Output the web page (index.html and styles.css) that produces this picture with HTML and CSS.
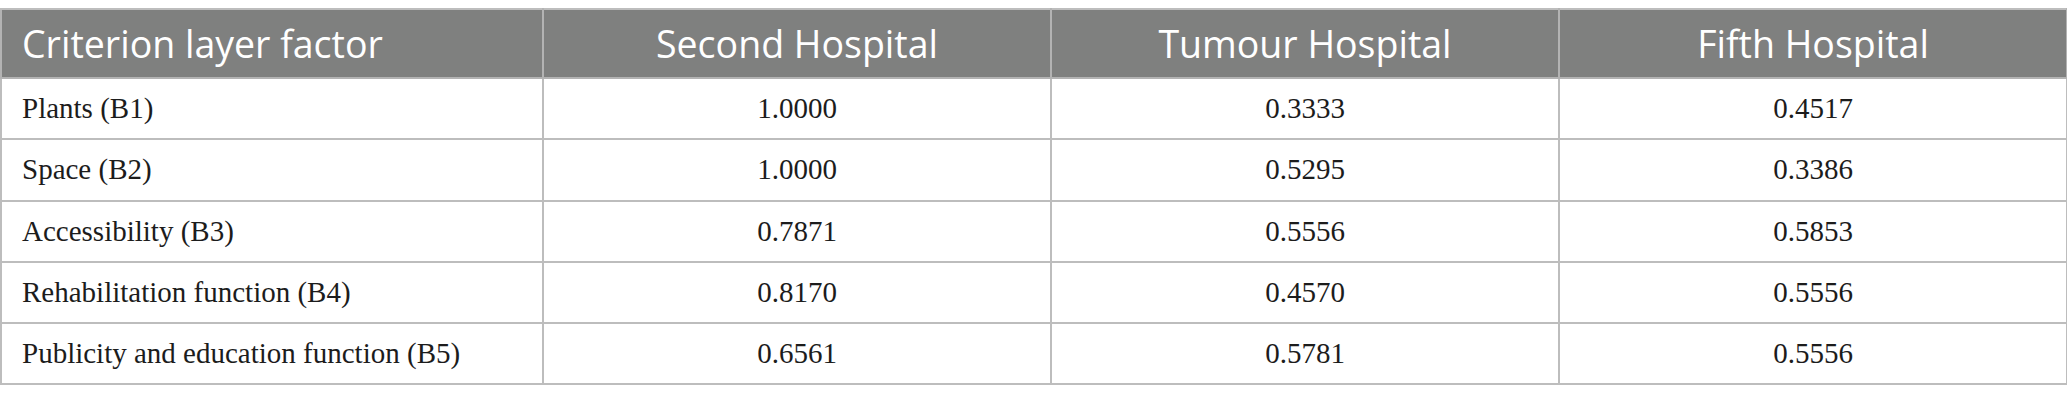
FILE: index.html
```html
<!DOCTYPE html>
<html>
<head>
<meta charset="utf-8">
<link rel="stylesheet" href="styles.css">
</head>
<body>
<table class="data">
  <colgroup>
    <col class="c-first">
    <col class="c-num">
    <col class="c-num">
    <col class="c-num">
  </colgroup>
  <thead>
    <tr>
      <th class="left">Criterion layer factor</th>
      <th>Second Hospital</th>
      <th>Tumour Hospital</th>
      <th>Fifth Hospital</th>
    </tr>
  </thead>
  <tbody>
    <tr><td class="left">Plants (B1)</td><td>1.0000</td><td>0.3333</td><td>0.4517</td></tr>
    <tr><td class="left">Space (B2)</td><td>1.0000</td><td>0.5295</td><td>0.3386</td></tr>
    <tr><td class="left">Accessibility (B3)</td><td>0.7871</td><td>0.5556</td><td>0.5853</td></tr>
    <tr><td class="left">Rehabilitation function (B4)</td><td>0.8170</td><td>0.4570</td><td>0.5556</td></tr>
    <tr><td class="left">Publicity and education function (B5)</td><td>0.6561</td><td>0.5781</td><td>0.5556</td></tr>
  </tbody>
</table>
</body>
</html>
```

FILE: styles.css
```css
html, body {
  margin: 0;
  padding: 0;
  background: #ffffff;
}
body {
  padding-top: 8px;
}
.data {
  border-collapse: collapse;
  table-layout: fixed;
  width: 2066px;
  font-family: "Liberation Serif", "Times New Roman", serif;
  font-size: 29px;
  color: #1c1c1c;
}
.c-first { width: 542px; }
.c-num { width: 508px; }
.data th {
  background: #7f807f;
  color: #ffffff;
  font-family: "Open Sans", "Noto Sans", sans-serif;
  font-weight: 400;
  font-size: 37.5px;
  height: 67px;
  padding: 0 20px;
  text-align: center;
  border: 2px solid #b3b3b3;
  border-top-color: #bdbdbd;
}
.data td {
  height: 61.3px;
  padding: 0 20px;
  text-align: center;
  border: 2px solid #bdbdbd;
  box-sizing: border-box;
}
.data .left {
  text-align: left;
}
```
